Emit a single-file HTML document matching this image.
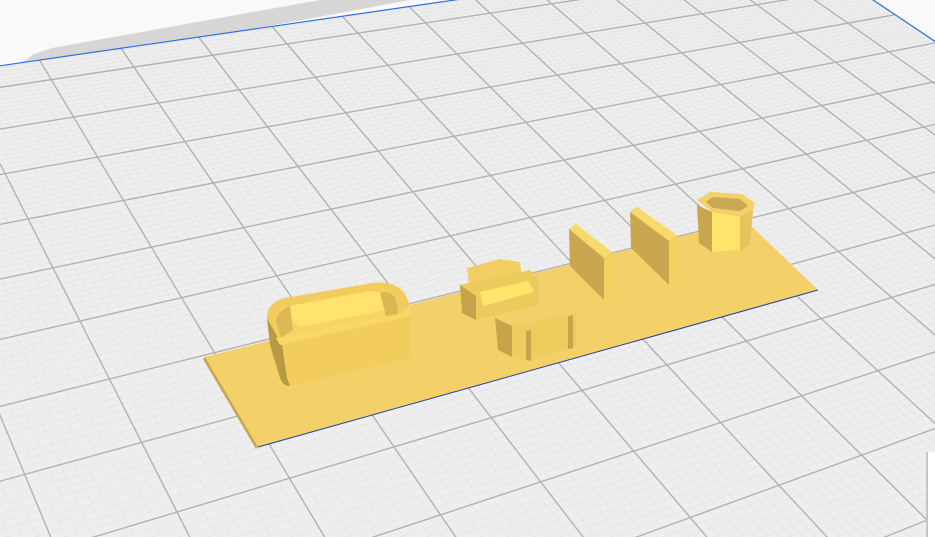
<!DOCTYPE html>
<html><head><meta charset="utf-8">
<style>
html,body{margin:0;padding:0;width:935px;height:537px;overflow:hidden;background:#f9f9f9;font-family:"Liberation Sans",sans-serif;}
svg{position:absolute;left:0;top:0;display:block;}
</style></head>
<body>
<svg id="g" width="935" height="537" viewBox="0 0 935 537" xmlns="http://www.w3.org/2000/svg">
  <rect width="935" height="537" fill="#f9f9f9"/>
  <polygon points="0,76 12,70 34,54 52,48 320,0 410,0" fill="#d6d6d6"/>
  <g id="bed"></g>
  <!-- plate -->
  <polygon points="205,357 745,220 818,290 258,447" fill="#f4d068"/>
  <polygon points="205,357 258,447 256,449 203,359" fill="#c9a74e"/>
  <line x1="258" y1="447" x2="818" y2="290" stroke="#2040a8" stroke-width="1"/>
  <!-- tub -->
  <path d="M267,318 Q266,303 285,298 L372,283 Q398,280 406,296 L410,305 L410,358 L290,386 Q283,386 280,378 L270,345 Z" fill="#f2cd5e"/>
  <path d="M267,318 L270,345 L280,378 Q283,386 290,386 L287,378 L282,345 L278,338 Z" fill="#b89a44"/>
  <path d="M276,322 Q276,312 290,306 L370,291 Q392,290 396,300 L398,314 L281,338 Z" fill="#f6d466"/>
  <path d="M290,306 L370,291 L380,293 L385,310 L300,327 L288,316 Z" fill="#ffe36c"/>
  <path d="M380,293 Q392,290 396,300 L398,314 L386,316 Z" fill="#d9b752"/>
  <path d="M276,322 Q276,312 290,306 L293,330 L281,338 Z" fill="#dcb954"/>
  <path d="M276,338 L400,314 L410,305 L410,316 L280,345 Z" fill="#f9d866"/>
  <!-- connector -->
  <polygon points="467,268 500,259 520,262 522,280 470,292" fill="#f2cd62"/>
  <polygon points="460,285 530,270 538,278 538,305 475,320 462,313" fill="#eccb5e"/>
  <polygon points="460,285 476,296 476,320 462,313" fill="#c6a44c"/>
  <polygon points="480,292 528,281 534,292 483,306" fill="#ffe66a"/>
  <!-- small block -->
  <polygon points="495,318 545,305 576,313 528,328" fill="#f4d06a"/>
  <polygon points="495,318 512,326 512,357 498,350" fill="#c6a44c"/>
  <polygon points="512,326 576,313 576,346 530,360 512,358" fill="#f0cc5e"/>
  <polygon points="526,331 531,330 531,361 526,360" fill="#c6a44c"/>
  <polygon points="568,316 573,315 573,348 568,349" fill="#c6a44c"/>
  <!-- fin 1 -->
  <polygon points="569,229 576,224 610,253 604,258 604,300 570,266" fill="#c8a750"/>
  <polygon points="576,224 612,252 604,258 569,229" fill="#f8da6c"/>
  <polygon points="604,258 612,252 612,296 604,301" fill="#f4d060"/>
  <!-- fin 2 -->
  <polygon points="630,212 637,207 676,236 669,241 669,285 631,248" fill="#c8a750"/>
  <polygon points="637,207 677,235 669,241 630,212" fill="#f8da6c"/>
  <polygon points="669,241 677,235 677,280 669,285" fill="#f4d060"/>
  <!-- hex tube -->
  <polygon points="697,200 710,192 742,194 755,203 752,214 740,217 712,212" fill="#f3d06a"/>
  <polygon points="706,202 713,197 740,199 748,206 740,211 713,208" fill="#c9a852"/>
  <polygon points="697,205 712,212 712,252 699,243" fill="#c8a650"/>
  <polygon points="712,212 740,217 740,250 712,252" fill="#ffe36a"/>
  <polygon points="740,217 753,210 750,245 740,251" fill="#e6c45a"/>
  <!-- side panel -->
  <rect x="926" y="452" width="9" height="85" fill="#ffffff"/>
  <rect x="926" y="452" width="2" height="85" fill="#c4c4c4"/>
</svg>
<script>
(function(){
  var a=0.0385,b=0.0493;
  function P(u,v){var p=a*u,q=b*v,d=1+p+q;return[(3212*p-576*q+177)/d,(-399*p-970*q+512)/d];}
  var g=document.getElementById("bed"),s="";
  var U0=-6,U1=12.93,V0=-6,V1=8.55;
  var c=[P(U0,V0),P(U1,V0),P(U1,V1),P(U0,V1)];
  s+='<polygon points="'+c.map(function(p){return p[0].toFixed(1)+","+p[1].toFixed(1)}).join(" ")+'" fill="#eeeeee"/>';
  function L(p1,p2,col,w){return '<line x1="'+p1[0].toFixed(1)+'" y1="'+p1[1].toFixed(1)+'" x2="'+p2[0].toFixed(1)+'" y2="'+p2[1].toFixed(1)+'" stroke="'+col+'" stroke-width="'+w+'"/>';}
  var i,t;
  for(i=-60;i<=129;i++){t=i/10;if(i%10===0)continue;s+=L(P(t,V0),P(t,V1),"#e2e2e2",0.6);}
  for(i=-60;i<=85;i++){t=i/10;if(i%10===0)continue;s+=L(P(U0,t),P(U1,t),"#e2e2e2",0.6);}
  for(i=-6;i<=12;i++){s+=L(P(i,V0),P(i,V1),"#b2b2b2",1.4);}
  for(i=-6;i<=8;i++){s+=L(P(U0,i),P(U1,i),"#b2b2b2",1.4);}
  s+=L(P(U0,V1),P(U1,V1),"#2b6fe0",1.2);
  s+=L(P(U1,V0),P(U1,V1),"#2b6fe0",1.2);
  g.innerHTML=s;
})();
</script>
</body></html>
